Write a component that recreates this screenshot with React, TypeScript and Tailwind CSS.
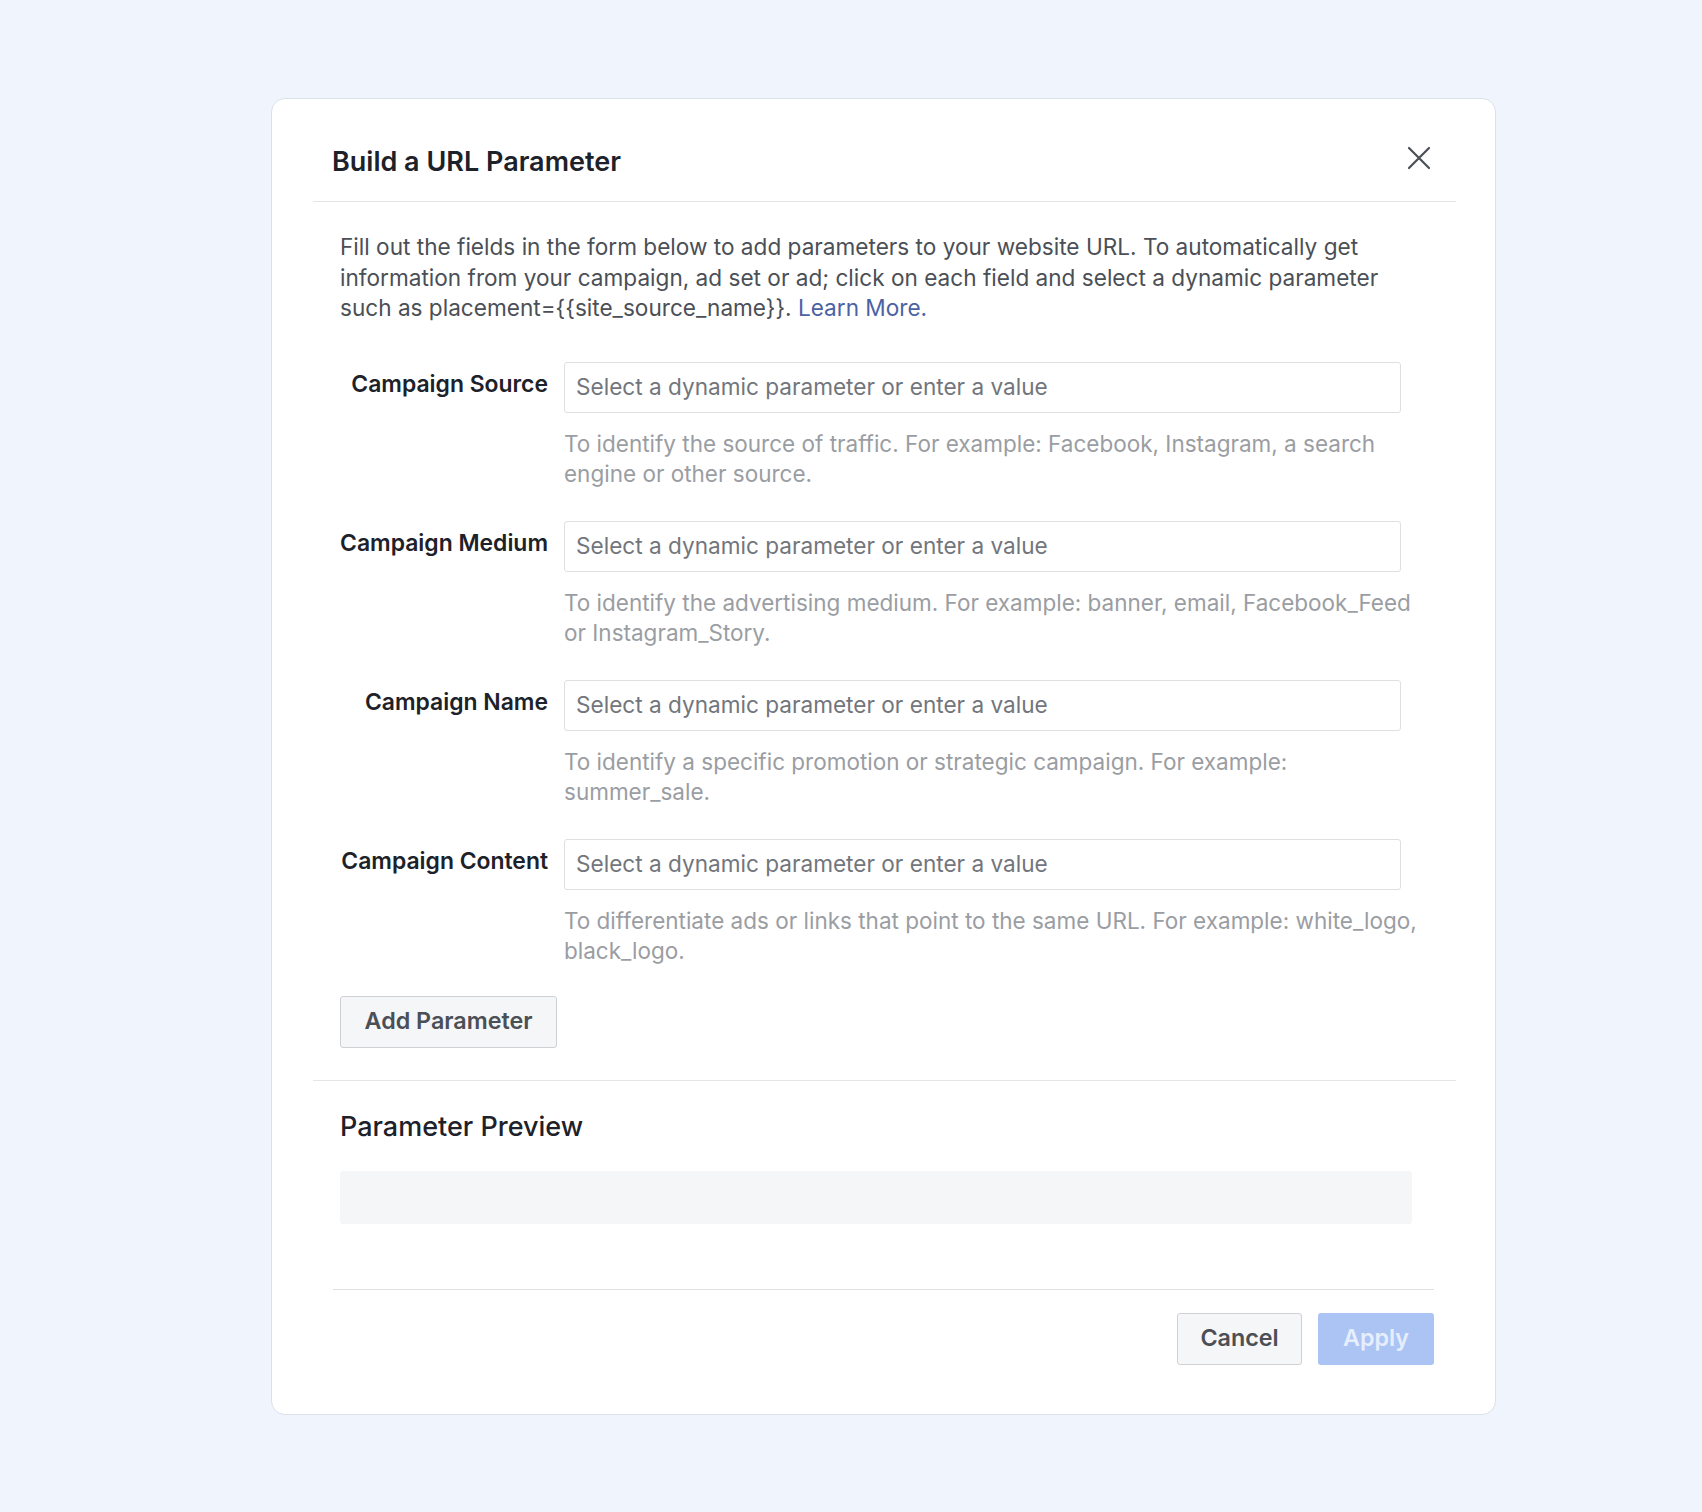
import React from "react";

const font = "font-['Inter','Liberation_Sans',sans-serif]";

type Row = { label: string; help: [string, string] };

const rows: Row[] = [
  {
    label: "Campaign Source",
    help: [
      "To identify the source of traffic. For example: Facebook, Instagram, a search",
      "engine or other source.",
    ],
  },
  {
    label: "Campaign Medium",
    help: [
      "To identify the advertising medium. For example: banner, email, Facebook_Feed",
      "or Instagram_Story.",
    ],
  },
  {
    label: "Campaign Name",
    help: [
      "To identify a specific promotion or strategic campaign. For example:",
      "summer_sale.",
    ],
  },
  {
    label: "Campaign Content",
    help: [
      "To differentiate ads or links that point to the same URL. For example: white_logo,",
      "black_logo.",
    ],
  },
];

export default function App() {
  return (
    <div className={`min-h-[1512px] w-full bg-[#f0f5fd] pt-[98px] pl-[271px] ${font}`}>
      <div className="w-[1225px] rounded-[14px] border border-[#dbe1e9] bg-white pl-[41px] pr-[39px]">
        {/* Header */}
        <div className="flex h-[103px] items-start justify-between border-b border-[#e3e5e8] pt-[46px] pl-[19px] pr-[25px]">
          <h1 className="text-[27px] leading-[34px] font-semibold text-[#1d2129]">
            Build a URL Parameter
          </h1>
          <button className="mt-[1px] flex h-[24px] w-[24px] items-center justify-center text-[#4b4f56]">
            <svg width="24" height="24" viewBox="0 0 24 24" fill="none" stroke="currentColor" strokeWidth="2.2" strokeLinecap="round">
              <path d="M2 2 L22 22 M22 2 L2 22" />
            </svg>
          </button>
        </div>

        {/* Body */}
        <div className="border-b border-[#e3e5e8] pt-[30px] pb-[32px] pl-[27px] pr-[22px]">
          <p className="text-[22.6px] leading-[30.5px] text-[#4b4f56] whitespace-nowrap">
            Fill out the fields in the form below to add parameters to your website URL. To automatically get
            <br />
            information from your campaign, ad set or ad; click on each field and select a dynamic parameter
            <br />
            such as placement={"{{"}site_source_name{"}}"}.{" "}
            <span className="text-[#4b62a3]">Learn More.</span>
          </p>

          <div className="mt-[38px] flex flex-col gap-[32px]">
            {rows.map((r) => (
              <div key={r.label} className="flex">
                <div className="w-[208px] shrink-0 pt-[7px] text-right text-[22.9px] leading-[30px] font-semibold text-[#1d2129] whitespace-nowrap">
                  {r.label}
                </div>
                <div className="ml-[16px] w-[870px]">
                  <div className="flex h-[51px] w-[837px] items-center rounded-[3px] border border-[#dddfe2] bg-white pl-[11px] text-[22.6px] text-[#72767c] whitespace-nowrap">
                    Select a dynamic parameter or enter a value
                  </div>
                  <div className="mt-[16px] text-[22.5px] leading-[30px] text-[#9a9da2] whitespace-nowrap">
                    {r.help[0]}
                    <br />
                    {r.help[1]}
                  </div>
                </div>
              </div>
            ))}
          </div>

          <button className="mt-[30px] flex h-[52px] w-[217px] items-center justify-center rounded-[3px] border border-[#ced0d4] bg-[#f5f6f7] text-[23.3px] font-semibold text-[#4b4f56]">
            Add Parameter
          </button>
        </div>

        {/* Preview */}
        <div className="pt-[29px] pl-[27px]">
          <h2 className="text-[27px] leading-[34px] font-medium text-[#1d2129]">Parameter Preview</h2>
          <div className="mt-[27px] h-[53px] w-[1072px] rounded-[3px] bg-[#f5f6f7]" />
        </div>

        <div className="mt-[65px] ml-[20px] mr-[22px] border-t border-[#dddfe2]" />

        <div className="flex justify-end gap-[16px] pt-[23px] pb-[49px] pr-[22px]">
          <button className="flex h-[52px] w-[125px] items-center justify-center rounded-[3px] border border-[#ced0d4] bg-[#f5f6f7] text-[23.3px] font-semibold text-[#4b4f56]">
            Cancel
          </button>
          <button className="flex h-[52px] w-[116px] items-center justify-center rounded-[3px] bg-[#abc4f4] text-[23.3px] font-semibold text-[#e6eefc]">
            Apply
          </button>
        </div>
      </div>
    </div>
  );
}
